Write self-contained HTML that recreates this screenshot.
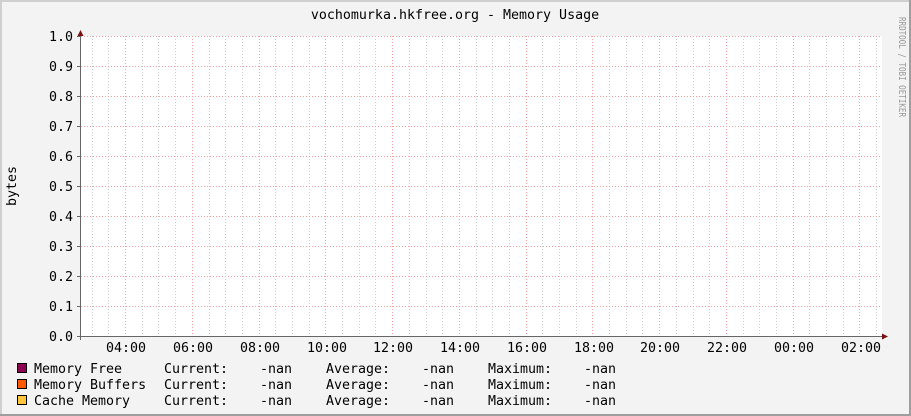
<!DOCTYPE html>
<html><head><style>
html,body{margin:0;padding:0;background:#f3f3f3}
svg{display:block}
text{font-family:"DejaVu Sans Mono","Liberation Mono",monospace;font-size:13.3px;fill:#000}
</style></head><body>
<svg width="911" height="416" xmlns="http://www.w3.org/2000/svg">
<rect x="0" y="0" width="911" height="416" fill="#f3f3f3"/>
<rect x="0" y="0" width="911" height="2" fill="#cfcfcf"/>
<rect x="0" y="0" width="2" height="416" fill="#cfcfcf"/>
<rect x="0" y="414" width="911" height="2" fill="#9e9e9e"/>
<rect x="909" y="0" width="2" height="416" fill="#9e9e9e"/>
<rect x="81" y="36" width="801" height="300" fill="#fff"/>
<g stroke-dasharray="1,2" stroke-width="1">
<g stroke="#ccc" id="minor"></g>
<g stroke="#f6a0a0" id="major"></g>
</g>
<script>
var mn=document.getElementById('minor'),mj=document.getElementById('major');var ns='http://www.w3.org/2000/svg';
function ln(g,x1,y1,x2,y2){var l=document.createElementNS(ns,'line');l.setAttribute('x1',x1);l.setAttribute('y1',y1);l.setAttribute('x2',x2);l.setAttribute('y2',y2);g.appendChild(l);}
for(var i=0;i<48;i++){var x=Math.round(91.7+16.69*i)+0.5;if(x>882)break;var isM=((i-2)%4===0);ln(isM?mj:mn,x,36,x,336);}
for(var j=0;j<10;j++){var y=36+30*j+0.5;ln(mj,81,y,882,y);}
</script>
<line x1="80.5" y1="33" x2="80.5" y2="340" stroke="#666"/>
<line x1="77" y1="336.5" x2="885" y2="336.5" stroke="#666"/>
<polygon points="77.5,36 83.5,36 80.5,30" fill="#7a1010"/>
<polygon points="882,333.5 882,339.5 888,336.5" fill="#7a1010"/>
<g stroke="#666">
<line x1="77" y1="36.5" x2="81" y2="36.5"/><line x1="77" y1="66.5" x2="81" y2="66.5"/><line x1="77" y1="96.5" x2="81" y2="96.5"/><line x1="77" y1="126.5" x2="81" y2="126.5"/><line x1="77" y1="156.5" x2="81" y2="156.5"/><line x1="77" y1="186.5" x2="81" y2="186.5"/><line x1="77" y1="216.5" x2="81" y2="216.5"/><line x1="77" y1="246.5" x2="81" y2="246.5"/><line x1="77" y1="276.5" x2="81" y2="276.5"/><line x1="77" y1="306.5" x2="81" y2="306.5"/>
</g>
<text x="455" y="19" text-anchor="middle">vochomurka.hkfree.org - Memory Usage</text>
<g text-anchor="end">
<text x="73" y="41">1.0</text><text x="73" y="71">0.9</text><text x="73" y="101">0.8</text><text x="73" y="131">0.7</text><text x="73" y="161">0.6</text><text x="73" y="191">0.5</text><text x="73" y="221">0.4</text><text x="73" y="251">0.3</text><text x="73" y="281">0.2</text><text x="73" y="311">0.1</text><text x="73" y="341">0.0</text>
</g>
<text transform="translate(16,186) rotate(-90)" text-anchor="middle">bytes</text>
<g text-anchor="middle">
<text x="126" y="352">04:00</text><text x="193" y="352">06:00</text><text x="260" y="352">08:00</text><text x="327" y="352">10:00</text><text x="393" y="352">12:00</text><text x="460" y="352">14:00</text><text x="527" y="352">16:00</text><text x="594" y="352">18:00</text><text x="660" y="352">20:00</text><text x="727" y="352">22:00</text><text x="794" y="352">00:00</text><text x="861" y="352">02:00</text>
</g>
<text transform="translate(899,17) rotate(90)" style="font-size:10px;fill:#999" textLength="100" lengthAdjust="spacingAndGlyphs">RRDTOOL / TOBI OETIKER</text>
<rect x="17.5" y="363.5" width="9" height="9" fill="#8e0052" stroke="#000"/>
<rect x="17.5" y="379.5" width="9" height="9" fill="#ff5a00" stroke="#000"/>
<rect x="17.5" y="395.5" width="9" height="9" fill="#ffc83c" stroke="#000"/>
<g>
<text x="34" y="373">Memory Free</text><text x="34" y="389">Memory Buffers</text><text x="34" y="405">Cache Memory</text>
<text x="164" y="373">Current:</text><text x="164" y="389">Current:</text><text x="164" y="405">Current:</text>
<text x="260" y="373">-nan</text><text x="260" y="389">-nan</text><text x="260" y="405">-nan</text>
<text x="326" y="373">Average:</text><text x="326" y="389">Average:</text><text x="326" y="405">Average:</text>
<text x="422" y="373">-nan</text><text x="422" y="389">-nan</text><text x="422" y="405">-nan</text>
<text x="488" y="373">Maximum:</text><text x="488" y="389">Maximum:</text><text x="488" y="405">Maximum:</text>
<text x="584" y="373">-nan</text><text x="584" y="389">-nan</text><text x="584" y="405">-nan</text>
</g>
</svg>
</body></html>
